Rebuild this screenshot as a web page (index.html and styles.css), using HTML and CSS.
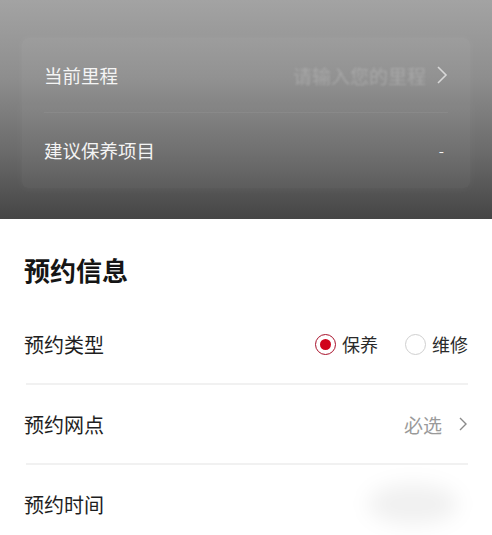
FILE: index.html
```html
<!DOCTYPE html>
<html lang="zh">
<head>
<meta charset="utf-8">
<link rel="stylesheet" href="styles.css">
</head>
<body>
<div class="backdrop">
  <div class="card">
    <div class="crow">
      <span class="clabel">当前里程</span>
      <span class="cval"><span class="ph">请输入您的里程</span>
        <svg class="chev-w" viewBox="0 0 12 20" width="12" height="20"><path d="M2 2 L10 10 L2 18" fill="none" stroke="#d8d8d8" stroke-width="1.6"/></svg>
      </span>
    </div>
    <div class="cdiv"></div>
    <div class="crow">
      <span class="clabel">建议保养项目</span>
      <span class="dash">-</span>
    </div>
  </div>
</div>
<div class="sheet">
  <h2 class="title">预约信息</h2>
  <div class="row">
    <span class="label">预约类型</span>
    <div class="radios">
      <span class="radio on"><span class="dot"></span></span><span class="rtext">保养</span>
      <span class="radio off"></span><span class="rtext">维修</span>
    </div>
  </div>
  <div class="divider"></div>
  <div class="row">
    <span class="label">预约网点</span>
    <span class="val">必选
      <svg class="chev" viewBox="0 0 10 16" width="10" height="16"><path d="M2 2 L8 8 L2 14" fill="none" stroke="#8a8a8a" stroke-width="1.4"/></svg>
    </span>
  </div>
  <div class="divider"></div>
  <div class="row">
    <span class="label">预约时间</span>
    <span class="blur"></span>
  </div>
</div>
</body>
</html>
```
FILE: styles.css
```css
* { box-sizing: border-box; }
html, body { margin: 0; padding: 0; }
body {
  width: 492px;
  height: 535px;
  overflow: hidden;
  background: #fff;
  font-family: "Noto Sans CJK SC", "Noto Sans", sans-serif;
}
.backdrop {
  height: 219px;
  background: linear-gradient(180deg, #a3a3a3 0%, #8e8e8e 35%, #6a6a6a 70%, #454545 100%);
  padding: 38px 22px 0 22px;
}
.card {
  height: 150px;
  background: rgba(255,255,255,0.04);
  border-radius: 6px;
  padding: 0 22px;
  box-shadow: 0 0 10px rgba(255,255,255,0.05);
}
.crow {
  height: 74px;
  display: flex;
  align-items: center;
  justify-content: space-between;
}
.clabel {
  color: #f4f4f4;
  font-size: 18.5px;
}
.cval {
  display: flex;
  align-items: center;
  gap: 10px;
}
.ph {
  color: rgba(190,190,190,0.5);
  font-size: 19px;
  filter: blur(1.2px);
}
.cdiv {
  height: 1px;
  background: rgba(255,255,255,0.06);
}
.dash {
  color: #f4f4f4;
  font-size: 15px;
  margin-right: 4px;
}
.sheet {
  padding: 0 24px;
}
.title {
  margin: 0;
  height: 86px;
  padding-top: 35px;
  font-size: 26px;
  line-height: 32px;
  font-weight: 700;
  color: #151515;
}
.row {
  height: 78px;
  display: flex;
  align-items: center;
  justify-content: space-between;
}
.label {
  font-size: 20px;
  color: #1e1e1e;
}
.radios {
  display: flex;
  align-items: center;
}
.radio {
  width: 21px;
  height: 21px;
  border-radius: 50%;
  display: inline-flex;
  align-items: center;
  justify-content: center;
}
.radio.on { border: 1.5px solid #a8102a; }
.radio.off { border: 1.5px solid #cfcfcf; margin-left: 27px; }
.dot {
  width: 11px;
  height: 11px;
  border-radius: 50%;
  background: #d0021b;
}
.rtext {
  font-size: 18px;
  color: #2a2a2a;
  margin-left: 6px;
}
.divider {
  height: 2px;
  background: #f1f1f1;
  margin: 0 0 0 2px;
}
.val {
  display: flex;
  align-items: center;
  gap: 16px;
  color: #9a9a9a;
  font-size: 19px;
}
.blur {
  width: 90px;
  height: 40px;
  border-radius: 50%;
  background: rgba(0,0,0,0.06);
  filter: blur(10px);
  margin-right: 10px;
}
```
